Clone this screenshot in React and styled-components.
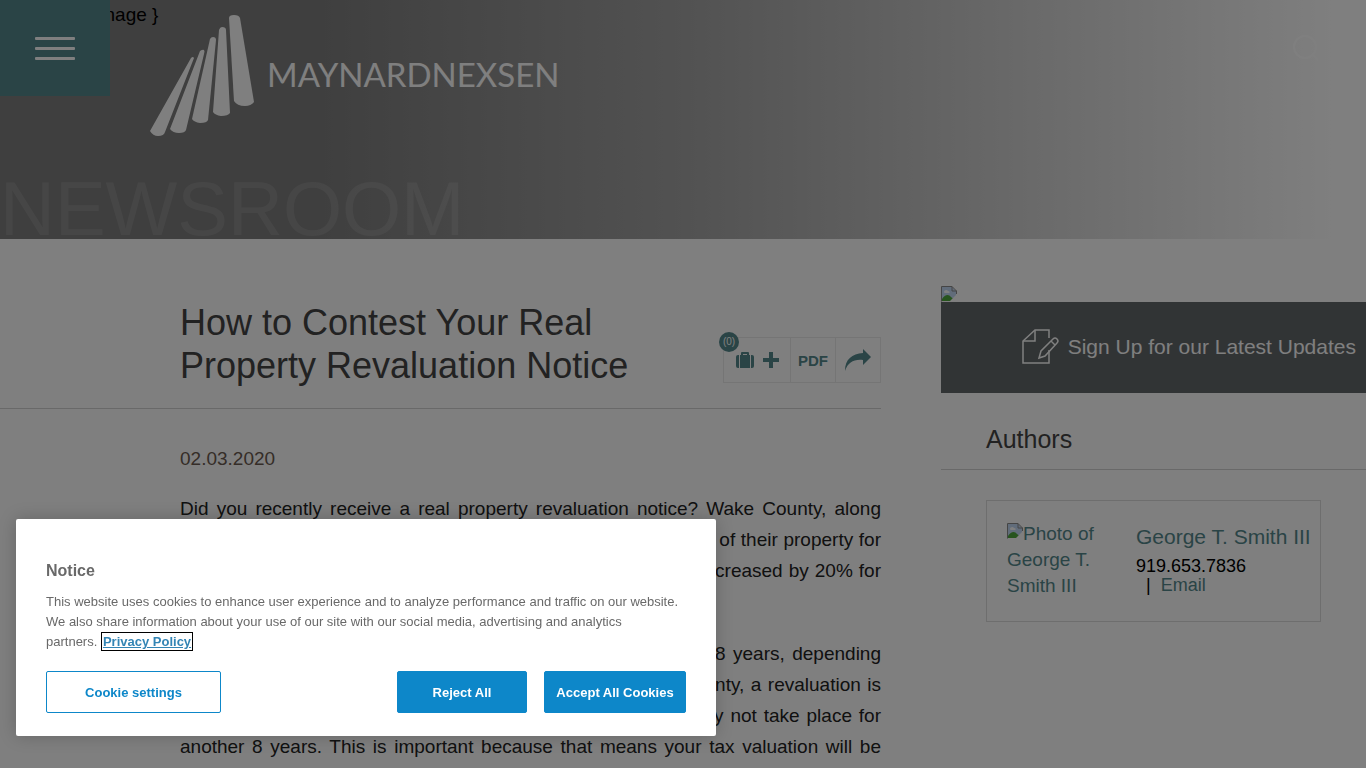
import React from 'react';
import styled, { createGlobalStyle } from 'styled-components';

const TEAL = '#54888c';
const BLUE = '#0d87c9';

const GlobalStyle = createGlobalStyle`
  * {
    box-sizing: border-box;
  }
  body {
    margin: 0;
    background: #fff;
    color: #222;
    font-family: "Liberation Sans", Arial, sans-serif;
    font-size: 19px;
  }
  h1, h2, p {
    margin: 0;
    font-weight: normal;
  }
  a {
    color: ${TEAL};
    text-decoration: none;
  }
  button {
    font-family: inherit;
    cursor: pointer;
  }
`

const Banner = styled.header`
  position: relative;
  display: flex;
  flex-direction: column;
  justify-content: space-between;
  min-height: 239px;
  background: linear-gradient(to right, #7e7e7e 23%, #a4a4a4 50%, #fff 98%);
`
const BannerNote = styled.span`
  padding-top: 4px;
  line-height: 22px;
  color: #000;
`
const BannerTitle = styled.span`
  font-size: 76px;
  line-height: 60px;
  color: rgba(255, 255, 255, 0.12);
`
const MenuButton = styled.button`
  position: absolute;
  top: 0;
  left: 0;
  display: flex;
  flex-direction: column;
  align-items: center;
  justify-content: center;
  gap: 7px;
  width: 110px;
  height: 96px;
  padding: 0;
  border: 0;
  background: ${TEAL};
`
const MenuBar = styled.span`
  width: 40px;
  height: 3px;
  border-radius: 1px;
  background: #fff;
`
const LogoLink = styled.a`
  position: absolute;
  top: 14px;
  left: 150px;
  display: flex;
  align-items: center;
  gap: 12px;
  color: #fff;
`
const LogoText = styled.span`
  padding-bottom: 3px;
  font-family: Lato, sans-serif;
  font-size: 33px;
  line-height: 40px;
`
const SearchButton = styled.button`
  position: absolute;
  top: 34px;
  right: 46px;
  padding: 0;
  border: 0;
  background: none;
`

const Columns = styled.div`
  display: flex;
  align-items: flex-start;
  gap: 60px;
`
const Main = styled.main`
  flex: 1;
  padding-top: 62px;
`
const TitleRow = styled.div`
  display: flex;
  justify-content: space-between;
  padding: 0 0 21px 180px;
  border-bottom: 1px solid #d2d2d2;
`
const Title = styled.h1`
  max-width: 480px;
  font-size: 36px;
  line-height: 43px;
  color: #444;
`
const Tools = styled.div`
  position: relative;
  display: flex;
  align-self: flex-end;
  border: 1px solid #ebebeb;
  margin-bottom: 4px;
`
const Tool = styled.button`
  display: flex;
  align-items: center;
  justify-content: center;
  gap: 9px;
  width: ${props => props.$wide ? '66px' : '45px'};
  height: 44px;
  padding: 0;
  border: 0;
  background: none;
  color: ${TEAL};
  font-size: 15px;
  font-weight: bold;

  & + & {
    border-left: 1px solid #ebebeb;
  }
`
const Count = styled.span`
  position: absolute;
  top: -6px;
  left: -5px;
  width: 20px;
  height: 20px;
  border-radius: 50%;
  background: ${TEAL};
  color: #fff;
  font-size: 10px;
  line-height: 20px;
  text-align: center;
`
const Article = styled.article`
  padding: 34px 0 0 180px;
  line-height: 31px;
  text-align: justify;
`
const PostDate = styled.p`
  color: #6b5b50;
`
const Paragraph = styled.p`
  margin-top: ${props => props.$first ? '19px' : '21px'};
`

const Aside = styled.aside`
  width: 425px;
  padding-top: 47px;
`
const SignUp = styled.a`
  display: flex;
  align-items: center;
  justify-content: flex-end;
  gap: 9px;
  min-height: 91px;
  padding: 0 10px 2px 0;
  background: #63686b;
  color: #fff;
  font-size: 21px;
`
const AsideTitle = styled.h2`
  padding: 30px 0 13px 45px;
  border-bottom: 1px solid #d2d2d2;
  font-size: 25px;
  line-height: 33px;
  color: #444;
`
const AuthorCard = styled.div`
  display: flex;
  gap: 29px;
  margin: 30px 45px 0;
  padding: 20px 0 22px 20px;
  border: 1px solid #ddd;
`
const Photo = styled.a`
  width: 100px;
  line-height: 26px;
`
const AuthorInfo = styled.div`
  flex: 1;
  font-size: 18px;
  line-height: 19px;
  color: #000;
`
const AuthorName = styled.a`
  display: block;
  padding: 3px 0 7px;
  font-size: 21px;
  line-height: 26px;
  white-space: nowrap;
`
const EmailRow = styled.div`
  display: flex;
  gap: 10px;
  padding-left: 10px;
`
const BrokenIcon = styled.svg`
  display: ${props => props.$block ? 'block' : 'inline'};
  vertical-align: text-top;
`

const Overlay = styled.div`
  position: fixed;
  inset: 0;
  background: rgba(0, 0, 0, 0.5);
`
const Dialog = styled.section`
  position: fixed;
  left: 16px;
  bottom: 32px;
  width: 700px;
  max-width: calc(100% - 32px);
  padding: 42px 30px 23px;
  border-radius: 2px;
  background: #fff;
  box-shadow: 0 0 18px rgba(0, 0, 0, 0.2);
  color: #696969;
  font-size: 13px;
  line-height: 20px;
`
const DialogTitle = styled.h2`
  padding-bottom: 11px;
  font-size: 16px;
  font-weight: bold;
`
const PolicyLink = styled.a`
  color: #3385b5;
  font-weight: bold;
  text-decoration: underline;
  outline: 1px solid #000;
  outline-offset: 1px;
  margin-left: 2px;
`
const DialogButtons = styled.div`
  display: flex;
  gap: 17px;
  padding-top: 19px;
`
const DialogButton = styled.button`
  width: ${props => props.$width};
  height: 42px;
  margin-right: ${props => props.$outline ? 'auto' : '0'};
  padding: 0;
  border: 1px solid ${BLUE};
  border-radius: 2px;
  background: ${props => props.$outline ? '#fff' : BLUE};
  color: ${props => props.$outline ? BLUE : '#fff'};
  font-size: 13px;
  font-weight: bold;
`

function BrokenImage({ block }) {
  return (
    <BrokenIcon $block={block} width="16" height="16" viewBox="0 0 16 16" aria-hidden="true">
      <path d="M1 1h10l4 4v10H1z" fill="#c3d9f5" />
      <path d="M1 15v-2c3-5 7-5 9-2l5 4z" fill="#4ea83c" />
      <path d="M3 6c0-2 3-3 4-1 2 0 2 2 1 2H4C3 7 3 6 3 6z" fill="#fff" />
      <path d="M8 16l8-8v8z" fill="#fff" />
      <path d="M.5 15.500V.5h10.500l4.500 4.500v3M11 .5V5h4.500" fill="none" stroke="#8a8a8a" />
    </BrokenIcon>
  )
}

function LogoMark() {
  return (
    <svg width="105" height="122" viewBox="0 0 105 122" fill="#fff" aria-hidden="true">
      <path d="M41 44q2-2 3 0L15 118q-1 4-7 4-5 0-8-5z" />
      <path d="M50 37q3-2 4-1 1 1 0 4L36 116q-1 3-7 3-6 0-9-4z" />
      <path d="M60 25q1-2 3-2 3 0 3 3L58 106q-1 3-8 3-6-1-8-4z" />
      <path d="M69 16q1-3 3-3 4 0 4 3l4 83q-2 3-9 3-6-1-8-4z" />
      <path d="M79 4q0-3 5-3t6 3l14 84q-3 4-9 4-8 0-11-5z" />
    </svg>
  )
}

function SignUpIcon() {
  return (
    <svg width="37" height="36" viewBox="0 0 37 36" fill="none" stroke="#fff" strokeWidth="1.500" aria-hidden="true">
      <path d="M27 9V1H13L1 12v22h26V21" />
      <path d="M13 1v11H1" />
      <path d="M17 29l2-7L31 10q2-2 4 0t0 4L23 27z" />
      <path d="M29 12l4 4" />
    </svg>
  )
}

function BriefcaseIcon() {
  return (
    <svg width="18" height="16" viewBox="0 0 18 16" fill="currentColor" aria-hidden="true">
      <path d="M3 3v13H2q-2 0-2-2V5q0-2 2-2z" />
      <path d="M4 3h1V1q0-1 1-1h6q1 0 1 1v2h1v13H4zm3 0h4V2H7z" fillRule="evenodd" />
      <path d="M15 3h1q2 0 2 2v9q0 2-2 2h-1z" />
    </svg>
  )
}

function PlusIcon() {
  return (
    <svg width="16" height="16" viewBox="0 0 16 16" fill="currentColor" aria-hidden="true">
      <path d="M6 0h4v6h6v4h-6v6H6v-6H0V6h6z" />
    </svg>
  )
}

function ShareIcon() {
  return (
    <svg width="26" height="22" viewBox="0 0 26 22" fill="currentColor" aria-hidden="true">
      <path d="M0 22C0 10 7 5 18 4V0l8 8-8 8v-5C9 10 3 13 0 22z" />
    </svg>
  )
}

export default function App() {
  return (
    <>
      <GlobalStyle />
      <Banner>
        <BannerNote>{'{ Practices image }'}</BannerNote>
        <BannerTitle>NEWSROOM</BannerTitle>
        <MenuButton aria-label="Menu">
          <MenuBar />
          <MenuBar />
          <MenuBar />
        </MenuButton>
        <LogoLink href="#home">
          <LogoMark />
          <LogoText>MAYNARDNEXSEN</LogoText>
        </LogoLink>
        <SearchButton aria-label="Search">
          <svg width="28" height="28" viewBox="0 0 28 28" fill="none" stroke="#fff" strokeWidth="2">
            <circle cx="13" cy="13" r="11" />
            <path d="M21 21l5 5" />
          </svg>
        </SearchButton>
      </Banner>

      <Columns>
        <Main>
          <TitleRow>
            <Title>How to Contest Your Real Property Revaluation Notice</Title>
            <Tools>
              <Tool $wide aria-label="Add to briefcase">
                <BriefcaseIcon />
                <PlusIcon />
              </Tool>
              <Tool>PDF</Tool>
              <Tool aria-label="Share">
                <ShareIcon />
              </Tool>
              <Count>(0)</Count>
            </Tools>
          </TitleRow>
          <Article>
            <PostDate>02.03.2020</PostDate>
            <Paragraph $first>
              Did you recently receive a real property revaluation notice? Wake County, along
              with several counties, recently notified owners of the new value of their property for
              tax purposes. On average, assessed values in Wake County increased by 20% for
              residential property.
            </Paragraph>
            <Paragraph>
              Counties must revalue their real property at least once every 8 years, depending
              on the current schedule each has adopted. Outside Wake County, a revaluation is
              an infrequent event, and so the next one for your property may not take place for
              another 8 years. This is important because that means your tax valuation will be
              established until then.
            </Paragraph>
          </Article>
        </Main>

        <Aside>
          <BrokenImage block />
          <SignUp href="#signup">
            <SignUpIcon />
            <span>Sign Up for our Latest Updates</span>
          </SignUp>
          <AsideTitle>Authors</AsideTitle>
          <AuthorCard>
            <Photo href="#author">
              <BrokenImage />
              Photo of George T. Smith III
            </Photo>
            <AuthorInfo>
              <AuthorName href="#author">George T. Smith III</AuthorName>
              <div>919.653.7836</div>
              <EmailRow>
                <span>|</span>
                <a href="#email">Email</a>
              </EmailRow>
            </AuthorInfo>
          </AuthorCard>
        </Aside>
      </Columns>

      <Overlay />
      <Dialog role="dialog" aria-labelledby="notice-title">
        <DialogTitle id="notice-title">Notice</DialogTitle>
        <p>
          This website uses cookies to enhance user experience and to analyze performance and
          traffic on our website. We also share information about your use of our site with our
          social media, advertising and analytics partners.&nbsp;<PolicyLink href="#privacy">Privacy Policy</PolicyLink>
        </p>
        <DialogButtons>
          <DialogButton $outline $width="175px">Cookie settings</DialogButton>
          <DialogButton $width="130px">Reject All</DialogButton>
          <DialogButton $width="142px">Accept All Cookies</DialogButton>
        </DialogButtons>
      </Dialog>
    </>
  )
}
